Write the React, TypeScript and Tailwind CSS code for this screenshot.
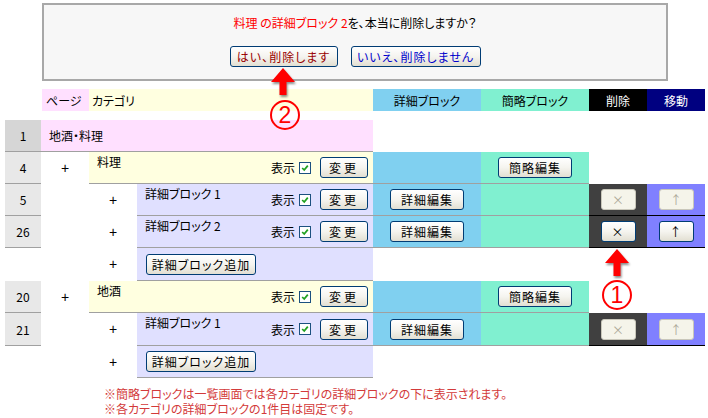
import type { ReactNode } from 'react';

const xpBtn =
  'flex h-[21px] items-center justify-center rounded-[3px] border border-[#003c74] bg-linear-to-b from-white via-[#f5f4ef] to-[#e2dfd2] tracking-[1px]';
const xpBtnOff =
  'flex h-[21px] items-center justify-center rounded-[3px] border border-[#c9c7ba] bg-[#f5f4ea] text-[#aca899]';

function Btn({ className = '', off = false, children }: { className?: string; off?: boolean; children: ReactNode }) {
  return (
    <button type="button" className={`${off ? xpBtnOff : xpBtn} ${className}`}>
      {children}
    </button>
  );
}

function Check() {
  return (
    <span className="ml-[4px] flex h-[12px] w-[12px] items-center justify-center border border-[#1c5180] bg-white">
      <svg viewBox="0 0 10 10" className="h-[8px] w-[8px]">
        <path d="M1.5 5 L4 7.5 L8.5 2" stroke="#21a121" strokeWidth="2.2" fill="none" />
      </svg>
    </span>
  );
}

function Controls() {
  return (
    <div className="flex items-center pr-[5px]">
      <span>表示</span>
      <Check />
      <Btn className="ml-[9px] w-[48px] tracking-[3px]">変更</Btn>
    </div>
  );
}

function PageCell({ n, dark = false }: { n: string; dark?: boolean }) {
  return (
    <div
      className={`flex w-[36px] items-center justify-center border-b border-[#a0a0a0] ${
        dark ? 'bg-[#d6d6d6]' : 'bg-[#e8e8e8]'
      }`}
    >
      {n}
    </div>
  );
}

function Plus() {
  return (
    <div className="flex w-[48px] items-center justify-center font-['Liberation_Sans',sans-serif] text-[14px]">+</div>
  );
}

function CategoryRow({ page, label }: { page: string; label: string }) {
  return (
    <div className="flex h-[32px]">
      <PageCell n={page} />
      <Plus />
      <div className="flex w-[284px] justify-between border-b border-[#a0a0a0] bg-[#ffffe0] pl-[8px]">
        <span className="pt-[2px]">{label}</span>
        <Controls />
      </div>
      <div className="w-[108px] border-b border-[#a0a0a0] bg-[#80d0f0]" />
      <div className="flex w-[108px] items-center justify-center border-b border-[#a0a0a0] bg-[#80f0d0]">
        <Btn className="w-[74px]">簡略編集</Btn>
      </div>
    </div>
  );
}

function BlockRow({ page, label, off = false, tall = false }: { page: string; label: string; off?: boolean; tall?: boolean }) {
  return (
    <div className={`flex ${tall ? 'h-[33px]' : 'h-[32px]'}`}>
      <PageCell n={page} />
      <div className="w-[48px]" />
      <Plus />
      <div className="flex w-[236px] justify-between border-b border-[#a0a0a0] bg-[#e0e0ff] pl-[8px]">
        <span className="pt-[2px]">{label}</span>
        <Controls />
      </div>
      <div className="flex w-[108px] items-center justify-center border-b border-[#a0a0a0] bg-[#80d0f0]">
        <Btn className="w-[74px]">詳細編集</Btn>
      </div>
      <div className="w-[108px] border-b border-[#a0a0a0] bg-[#80f0d0]" />
      <div className="flex w-[58px] items-center justify-center border-b border-black bg-[#404040]">
        <Btn off={off} className="w-[35px]">×</Btn>
      </div>
      <div className="flex w-[58px] items-center justify-center border-b border-black bg-[#8080ff]">
        <Btn off={off} className="w-[35px]">↑</Btn>
      </div>
    </div>
  );
}

function AddRow({ tall = false }: { tall?: boolean }) {
  return (
    <div className={`flex ${tall ? 'h-[33px]' : 'h-[32px]'}`}>
      <div className="w-[36px]" />
      <div className="w-[48px]" />
      <Plus />
      <div className="flex w-[236px] items-center border-b border-[#a0a0a0] bg-[#e0e0ff] pl-[9px]">
        <Btn className="w-[110px]">詳細ブロック追加</Btn>
      </div>
    </div>
  );
}

function Arrow({ className }: { className: string }) {
  return (
    <svg
      className={`absolute drop-shadow-[1px_2px_1px_rgba(0,0,0,0.45)] ${className}`}
      width="26"
      height="30"
      viewBox="0 0 26 30"
    >
      <path d="M13 1 L25 15 L16.5 15 L16.5 28 L9.5 28 L9.5 15 L1 15 Z" fill="#ff0000" />
    </svg>
  );
}

export default function App() {
  return (
    <div className="relative h-[418px] w-[708px] overflow-hidden bg-white font-['Noto_Sans_CJK_JP','Noto_Sans',sans-serif] text-[12px] leading-[15px] text-black [font-feature-settings:'palt']">
      {/* confirm dialog */}
      <div className="ml-[42px] mt-[3px] flex h-[78px] w-[626px] flex-col items-center border-2 border-[#a8a8a8] bg-[#f7f7f7]">
        <p className="mt-[10px]">
          <span className="text-[#ff0000]">料理 の詳細ブロック 2</span>を、本当に削除しますか？
        </p>
        <div className="mt-[16px] flex gap-[13px]">
          <Btn className="w-[108px] text-[#990000]">はい、削除します</Btn>
          <Btn className="w-[130px] text-[#0000cc]">いいえ、削除しません</Btn>
        </div>
      </div>

      {/* header */}
      <div className="mt-[8px] flex h-[22px] pl-[42px]">
        <div className="flex w-[47px] items-center bg-[#ffe0ff] pl-[4px]">ページ</div>
        <div className="flex w-[284px] items-center bg-[#ffffe0] pl-[3px]">カテゴリ</div>
        <div className="flex w-[108px] items-center justify-center bg-[#80d0f0]">詳細ブロック</div>
        <div className="flex w-[108px] items-center justify-center bg-[#80f0d0]">簡略ブロック</div>
        <div className="flex w-[58px] items-center justify-center bg-black text-white">削除</div>
        <div className="flex w-[58px] items-center justify-center bg-[#000080] text-white">移動</div>
      </div>

      {/* rows */}
      <div className="mt-[9px] flex flex-col pl-[5px]">
        <div className="flex h-[32px]">
          <PageCell n="1" dark />
          <div className="flex w-[332px] items-center border-b border-[#a0a0a0] bg-[#ffe0ff] pl-[8px]">地酒・料理</div>
        </div>
        <CategoryRow page="4" label="料理" />
        <BlockRow page="5" label="詳細ブロック 1" off />
        <BlockRow page="26" label="詳細ブロック 2" />
        <AddRow tall />
        <CategoryRow page="20" label="地酒" />
        <BlockRow page="21" label="詳細ブロック 1" off tall />
        <AddRow />
      </div>

      {/* notes */}
      <div className="mt-[8px] flex flex-col pl-[104px] text-[#d33a3a]">
        <p className="h-[15px]">※簡略ブロックは一覧画面では各カテゴリの詳細ブロックの下に表示されます。</p>
        <p className="h-[15px]">※各カテゴリの詳細ブロックの1件目は固定です。</p>
      </div>

      {/* annotations */}
      <Arrow className="left-[270px] top-[67px]" />
      <div className="absolute left-[270px] top-[100px] flex h-[30px] w-[30px] items-center justify-center rounded-full border-2 border-[#ff0000] font-['Liberation_Sans',sans-serif] text-[23px] leading-none text-[#ff0000]">
        2
      </div>
      <Arrow className="left-[604px] top-[248px]" />
      <div className="absolute left-[602px] top-[280px] flex h-[30px] w-[30px] items-center justify-center rounded-full border-2 border-[#ff0000] font-['Liberation_Sans',sans-serif] text-[23px] leading-none text-[#ff0000]">
        1
      </div>
    </div>
  );
}
